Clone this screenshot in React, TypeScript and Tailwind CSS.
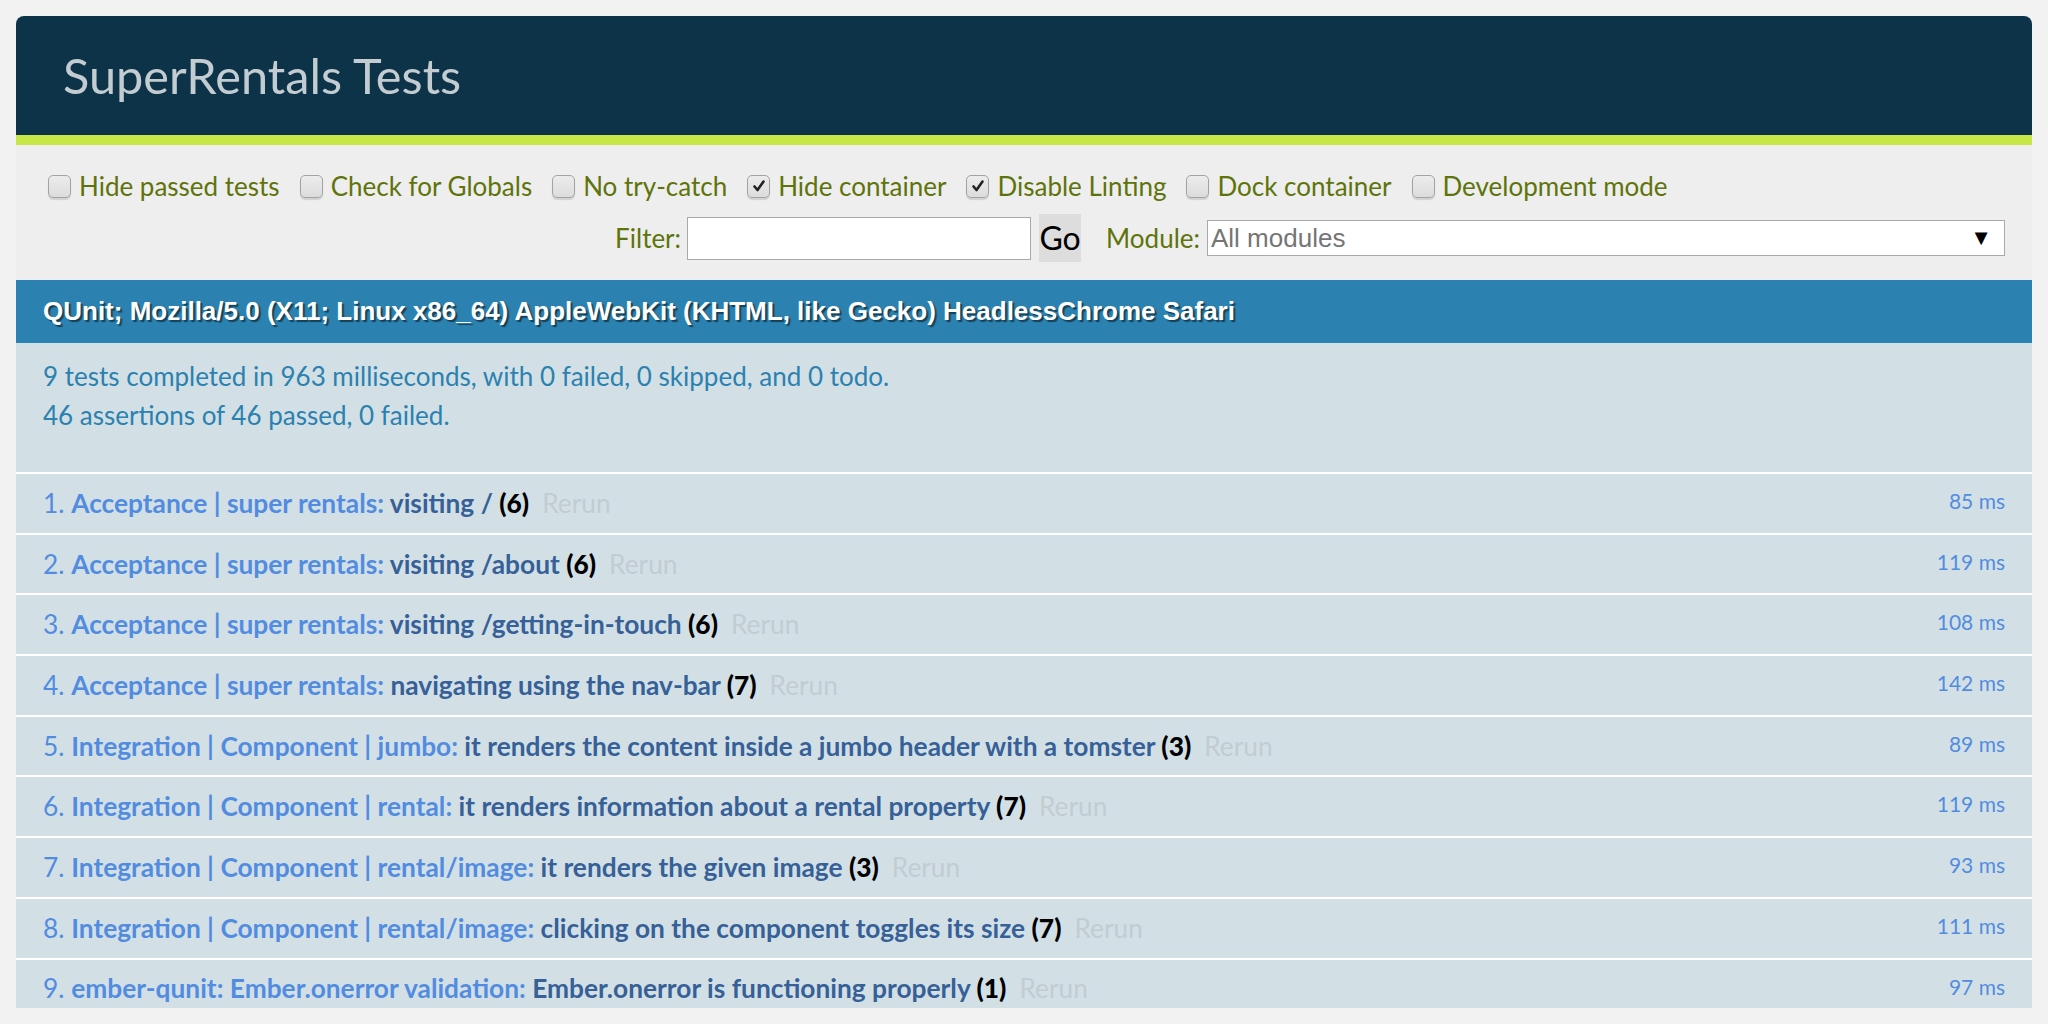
import React from 'react';

const lato = "font-['Lato','Carlito','Open_Sans',sans-serif]";

// toolbar options
const options = [
  { label: 'Hide passed tests', checked: false },
  { label: 'Check for Globals', checked: false },
  { label: 'No try-catch', checked: false },
  { label: 'Hide container', checked: true },
  { label: 'Disable Linting', checked: true },
  { label: 'Dock container', checked: false },
  { label: 'Development mode', checked: false },
];

const tests = [
  { module: 'Acceptance | super rentals', name: 'visiting /', count: 6, ms: 85 },
  { module: 'Acceptance | super rentals', name: 'visiting /about', count: 6, ms: 119 },
  { module: 'Acceptance | super rentals', name: 'visiting /getting-in-touch', count: 6, ms: 108 },
  { module: 'Acceptance | super rentals', name: 'navigating using the nav-bar', count: 7, ms: 142 },
  { module: 'Integration | Component | jumbo', name: 'it renders the content inside a jumbo header with a tomster', count: 3, ms: 89 },
  { module: 'Integration | Component | rental', name: 'it renders information about a rental property', count: 7, ms: 119 },
  { module: 'Integration | Component | rental/image', name: 'it renders the given image', count: 3, ms: 93 },
  { module: 'Integration | Component | rental/image', name: 'clicking on the component toggles its size', count: 7, ms: 111 },
  { module: 'ember-qunit: Ember.onerror validation', name: 'Ember.onerror is functioning properly', count: 1, ms: 97 },
];

function Checkbox({ checked }: { checked: boolean }) {
  return (
    <span className="relative flex h-[23px] w-[23px] shrink-0 items-center justify-center rounded-[5px] border-[1.5px] border-[#a3a3a3] bg-gradient-to-b from-[#ececec] to-[#dcdcdc] shadow-[0_2px_1px_rgba(0,0,0,0.12)]">
      {checked && (
        <svg width="14" height="14" viewBox="0 0 14 14">
          <path d="M2.5 7.5 L5.5 11 L11.5 2.5" fill="none" stroke="#222" strokeWidth="2.6" strokeLinecap="round" strokeLinejoin="round" />
        </svg>
      )}
    </span>
  );
}

export default function App() {
  return (
    <div className={`min-h-screen bg-[#f2f2f2] px-4 pt-4 ${lato}`}>
      <div className="overflow-hidden rounded-t-[8px]">
        {/* Header */}
        <div className="flex h-[119px] items-center bg-[#0d3349] pl-[47px]">
          <h1 className="text-[48.7px] font-normal leading-none text-[#c2ccd1]">SuperRentals Tests</h1>
        </div>
        <div className="h-[10px] bg-[#c6e746]" />

        {/* Toolbar */}
        <div className="flex h-[135px] flex-col bg-[#eeeeee] pl-[32px] pr-[27px] pt-[26px] text-[26px] text-[#5e740b]">
          <div className="flex h-[30px] items-center">
            {options.map((o) => (
              <label key={o.label} className="mr-[20px] flex items-center gap-[8px]">
                <Checkbox checked={o.checked} />
                <span className="leading-none">{o.label}</span>
              </label>
            ))}
          </div>
          <div className="mt-[13px] flex h-[48px] items-center justify-end">
            <span className="mr-[6px] leading-none">Filter:</span>
            <div className="h-[43px] w-[344px] border border-[#a9a9a9] bg-white" />
            <button className="ml-[8px] flex h-[48px] w-[42px] items-center justify-center bg-[#dddddd] text-[32px] leading-none text-black">
              Go
            </button>
            <span className="ml-[25px] mr-[7px] leading-none">Module:</span>
            <div className="flex h-[36px] w-[798px] items-center justify-between border border-[#a9a9a9] bg-white pl-[3px] pr-[12px] font-['Liberation_Sans',Arial,sans-serif] text-[26px] text-[#757575]">
              <span className="leading-none">All modules</span>
              <span className="text-[22px] leading-none text-black">▼</span>
            </div>
          </div>
        </div>

        {/* User agent */}
        <div className="flex h-[63px] items-center bg-[#2b81af] pl-[27px] font-['Liberation_Sans',Arial,sans-serif] text-[26px] font-bold text-white [text-shadow:rgba(0,0,0,0.5)_2px_2px_1px]">
          QUnit; Mozilla/5.0 (X11; Linux x86_64) AppleWebKit (KHTML, like Gecko) HeadlessChrome Safari
        </div>

        {/* Result summary */}
        <div className="h-[129px] bg-[#d2e0e6] pl-[27px] pt-[14px] text-[26px] leading-[39px] text-[#2b81af]">
          <div>9 tests completed in 963 milliseconds, with 0 failed, 0 skipped, and 0 todo.</div>
          <div>46 assertions of 46 passed, 0 failed.</div>
        </div>

        {/* Tests */}
        <ol className="flex flex-col gap-[2px] bg-white pt-[2px]">
          {tests.map((t, i) => (
            <li
              key={i}
              className={`flex items-start justify-between bg-[#d2e0e6] pl-[27px] pr-[27px] text-[#528ce0] ${
                i === tests.length - 1 ? 'h-[48px]' : 'h-[58.7px]'
              }`}
            >
              <div className="flex h-[58px] items-center whitespace-nowrap text-[26.3px] leading-none">
                <span>{i + 1}.&nbsp;</span>
                <strong className="font-bold">
                  <span>{t.module}</span>:{' '}
                  <span className="text-[#366097]">{t.name}</span>{' '}
                  <b className="text-black">({t.count})</b>
                </strong>
                <a className="ml-[13px] text-[#c2ccd1]">Rerun</a>
              </div>
              <span className="flex h-[53px] items-center text-[21px] leading-none">{t.ms} ms</span>
            </li>
          ))}
        </ol>
      </div>
    </div>
  );
}
